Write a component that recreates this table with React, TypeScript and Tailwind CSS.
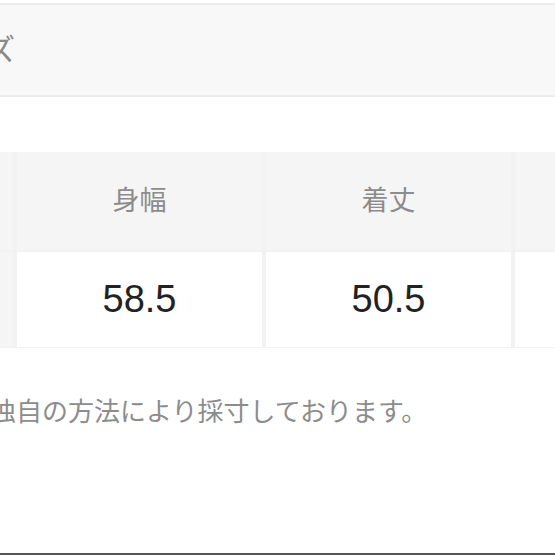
export default function App() {
  const font = { fontFamily: '"Liberation Sans", "Noto Sans CJK JP", sans-serif' };
  return (
    <div className="w-[555px] h-[555px] bg-white overflow-hidden flex flex-col" style={font}>
      {/* section title bar */}
      <div className="mt-[3px] h-[94px] bg-[#f8f8f8] border-y-2 border-[#ececec] flex items-center">
        <span className="-ml-[74px] text-[30px] leading-none text-[#8a8a8a] whitespace-nowrap">サイズ</span>
      </div>

      {/* size table */}
      <div className="mt-[55px] bg-[#f2f2f2] pb-[1px]">
        <div className="grid grid-cols-[13px_245px_245px_245px] gap-x-[4px] gap-y-[2px]">
          <div className="h-[98px] bg-[#f5f5f5]" />
          <div className="h-[98px] bg-[#f5f5f5] flex items-center justify-center text-[27px] text-[#8c8c8c]">身幅</div>
          <div className="h-[98px] bg-[#f5f5f5] flex items-center justify-center text-[27px] text-[#8c8c8c]">着丈</div>
          <div className="h-[98px] bg-[#f5f5f5]" />

          <div className="h-[95px] bg-[#f5f5f5]" />
          <div className="h-[95px] bg-white flex items-center justify-center text-[38px] text-[#222]">58.5</div>
          <div className="h-[95px] bg-white flex items-center justify-center text-[38px] text-[#222]">50.5</div>
          <div className="h-[95px] bg-white" />
        </div>
      </div>

      {/* note */}
      <p className="mt-[51px] -ml-[10px] text-[26px] leading-[26px] text-[#8c8c8c] whitespace-nowrap">
        独自の方法により採寸しております。
      </p>

      <div className="mt-auto h-[2px] bg-[#555]" />
    </div>
  );
}
